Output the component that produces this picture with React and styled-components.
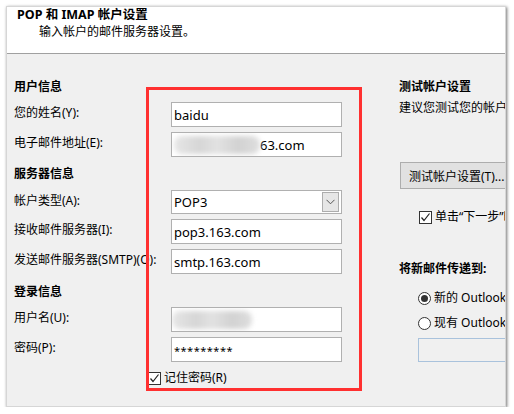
import React from 'react';
import styled, { createGlobalStyle } from 'styled-components';

const GlobalStyle = createGlobalStyle`
  html, body {
    margin: 0;
    padding: 0;
    background: #ffffff;
  }
  body {
    font-family: "Noto Sans", "Noto Sans CJK SC", sans-serif;
    font-size: 12px;
    color: #000;
  }
`;

const Window = styled.div`
  position: relative;
  box-sizing: border-box;
  margin: 6px 0 0 6px;
  width: 500px;
  height: 401px;
  overflow: hidden;
  background: #f0f0f0;
  border: 1px solid #d6d6d6;
  box-shadow: 1px 1px 3px rgba(0, 0, 0, 0.55);
`;

const Header = styled.div`
  height: 46px;
  background: #ffffff;
  border-bottom: 1px solid #a0a0a0;
`;

const Title = styled.div`
  padding-left: 10px;
  line-height: 16px;
  font-size: 12.5px;
  font-weight: 700;
`;

const Subtitle = styled.div`
  padding-left: 32px;
  margin-top: 1px;
  line-height: 16px;
`;

const Body = styled.div`
  display: flex;
  align-items: flex-start;
`;

const LeftSection = styled.div`
  flex: 0 0 auto;
  width: 328px;
  padding: 25px 0 0 7px;
`;

const RightSection = styled.div`
  flex: 1 1 auto;
  min-width: 0;
  margin-left: 57px;
  padding-top: 25px;
  overflow: hidden;
  white-space: nowrap;
`;

const Heading = styled.div`
  line-height: 16px;
  font-weight: 700;
  margin-top: ${(p) => p.$top || 0}px;
  margin-bottom: ${(p) => p.$bottom || 0}px;
`;

const FormGrid = styled.div`
  display: grid;
  grid-template-columns: 157px 171px;
  row-gap: 5px;
`;

const Label = styled.div`
  align-self: center;
  line-height: 16px;
  white-space: nowrap;
  margin-top: -3px;
`;

const TextBox = styled.div`
  box-sizing: border-box;
  height: ${(p) => p.$h || 25}px;
  width: ${(p) => (p.$w ? `${p.$w}px` : 'auto')};
  margin-left: ${(p) => p.$left || 0}px;
  margin-top: ${(p) => p.$top || 0}px;
  background: ${(p) => (p.$disabled ? '#f0f0f0' : '#ffffff')};
  border: 1px solid ${(p) => (p.$disabled ? '#a9c2dc' : '#b0b0b0')};
  display: flex;
  align-items: center;
  padding-left: 2px;
  font-size: 13px;
  line-height: 16px;
  white-space: nowrap;
  overflow: hidden;
`;

const Blur = styled.span`
  display: inline-block;
  width: ${(p) => p.$w}px;
  height: 18px;
  margin-left: ${(p) => p.$left || 0}px;
  background: linear-gradient(90deg, #e6e6e6 0%, #d6d6d6 30%, #e2e2e2 50%, #d2d2d2 75%, #dedede 100%);
  filter: blur(2.5px);
  border-radius: 8px;
`;

const Stars = styled.span`
  font-size: 11px;
  letter-spacing: 0.5px;
  margin-top: 2px;
`;

const Combo = styled(TextBox)`
  padding-right: 2px;
  justify-content: space-between;
`;

const DropButton = styled.div`
  box-sizing: border-box;
  width: 17px;
  height: 20px;
  background: #e6e6e6;
  border: 1px solid #adadad;
  display: flex;
  align-items: center;
  justify-content: center;
`;

const CheckRow = styled.div`
  display: flex;
  align-items: center;
  gap: 3px;
  line-height: 16px;
  margin-top: ${(p) => p.$top || 0}px;
  margin-left: ${(p) => p.$left || 0}px;
`;

const Box = styled.span`
  box-sizing: border-box;
  flex: 0 0 auto;
  width: 13px;
  height: 13px;
  border: 1px solid #333333;
  background: #ffffff;
  display: flex;
  align-items: center;
  justify-content: center;
`;

const Radio = styled(Box)`
  border-radius: 50%;
`;

const Dot = styled.span`
  width: 7px;
  height: 7px;
  border-radius: 50%;
  background: #333333;
`;

const Desc = styled.div`
  line-height: 16px;
  margin-top: 5px;
`;

const Button = styled.div`
  box-sizing: border-box;
  margin: 46px 0 0 1px;
  width: 150px;
  height: 27px;
  background: #e1e1e1;
  border: 1px solid #adadad;
  display: flex;
  align-items: center;
  padding-left: 8px;
`;

const Highlight = styled.div`
  position: absolute;
  left: 139px;
  top: 80px;
  width: 216px;
  height: 304px;
  box-sizing: border-box;
  border: 3px solid #ff3030;
  pointer-events: none;
`;

const Check = () => (
  <svg width="11" height="11" viewBox="0 0 11 11">
    <polyline points="1.5,5.5 4,8.5 9.5,1.5" fill="none" stroke="#222" strokeWidth="1.2" />
  </svg>
);

const Chevron = () => (
  <svg width="9" height="6" viewBox="0 0 9 6">
    <polyline points="0.5,0.8 4.5,4.8 8.5,0.8" fill="none" stroke="#555" strokeWidth="1" />
  </svg>
);

export default function App() {
  return (
    <>
      <GlobalStyle />
      <Window>
        <Header>
          <Title>POP 和 IMAP 帐户设置</Title>
          <Subtitle>输入帐户的邮件服务器设置。</Subtitle>
        </Header>
        <Body>
          <LeftSection>
            <Heading $bottom={7}>用户信息</Heading>
            <FormGrid>
              <Label>您的姓名(Y):</Label>
              <TextBox>baidu</TextBox>
              <Label>电子邮件地址(E):</Label>
              <TextBox>
                <Blur $w={86} />
                <span>63.com</span>
              </TextBox>
            </FormGrid>

            <Heading $top={9} $bottom={8}>服务器信息</Heading>
            <FormGrid>
              <Label>帐户类型(A):</Label>
              <Combo $h={24}>
                <span>POP3</span>
                <DropButton>
                  <Chevron />
                </DropButton>
              </Combo>
              <Label>接收邮件服务器(I):</Label>
              <TextBox>pop3.163.com</TextBox>
              <Label>发送邮件服务器(SMTP)(O):</Label>
              <TextBox>smtp.163.com</TextBox>
            </FormGrid>

            <Heading $top={10} $bottom={7}>登录信息</Heading>
            <FormGrid>
              <Label>用户名(U):</Label>
              <TextBox>
                <Blur $w={80} $left={-2} />
              </TextBox>
              <Label>密码(P):</Label>
              <TextBox>
                <Stars>*********</Stars>
              </TextBox>
            </FormGrid>
            <CheckRow $top={8} $left={134}>
              <Box>
                <Check />
              </Box>
              <span>记住密码(R)</span>
            </CheckRow>
            <CheckRow $top={19} $left={16}>
              <Box />
              <span>要求使用安全密码验证(SPA)进行登录(Q)</span>
            </CheckRow>
          </LeftSection>

          <RightSection>
            <Heading>测试帐户设置</Heading>
            <Desc>建议您测试您的帐户以确保条目正确无误。</Desc>
            <Button>测试帐户设置(T)...</Button>
            <CheckRow $top={20} $left={20}>
              <Box>
                <Check />
              </Box>
              <span>单击“下一步”时自动测试帐户设置(S)</span>
            </CheckRow>
            <Heading $top={36}>将新邮件传递到:</Heading>
            <CheckRow $top={13} $left={19}>
              <Radio>
                <Dot />
              </Radio>
              <span>新的 Outlook 数据文件(W)</span>
            </CheckRow>
            <CheckRow $top={9} $left={19}>
              <Radio />
              <span>现有 Outlook 数据文件(X)</span>
            </CheckRow>
            <TextBox $disabled $h={24} $w={150} $left={19} $top={7} />
          </RightSection>
        </Body>
        <Highlight />
      </Window>
    </>
  );
}
